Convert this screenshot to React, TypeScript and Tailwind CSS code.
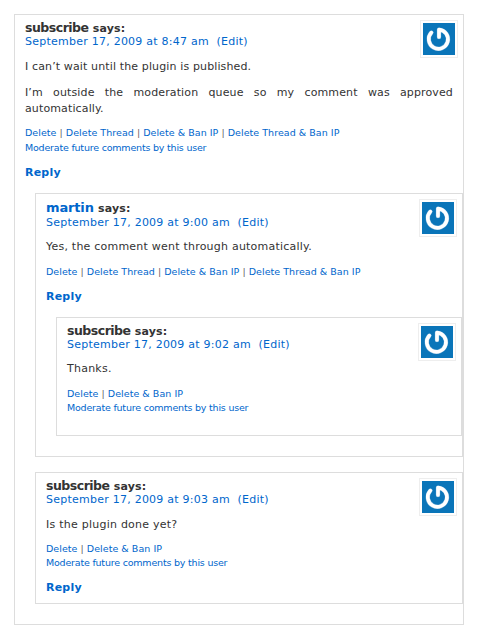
import { ReactNode } from "react";
import { clsx } from "clsx";

type CommentProps = {
  author: string;
  authorLink?: boolean;
  date: string;
  body: string[];
  actions: string[];
  moderate?: boolean;
  reply?: boolean;
  className?: string;
  bodyClass?: string;
  actionsClass?: string;
  children?: ReactNode;
};

function Avatar({ className }: { className?: string }) {
  return (
    <div className={clsx("float-right -mr-[5px] size-[38px] border border-[#eee] bg-white p-[2px]", className)}>
      <svg viewBox="0 0 32 32" className="block size-8 bg-[#0a75b9]" fill="none" strokeLinecap="round" strokeLinejoin="round">
        <path d="M8.4 9.6A9.6 9.6 0 1 0 16 6.6V14" stroke="#5fa3d0" strokeWidth="4.4" />
        <path d="M8.4 9.6A9.6 9.6 0 1 0 16 6.6V14" stroke="#fff" strokeWidth="3.7" />
      </svg>
    </div>
  );
}

function Comment({
  author,
  authorLink,
  date,
  body,
  actions,
  moderate,
  reply,
  className,
  bodyClass = "mt-2.5 tracking-[0.24px]",
  actionsClass = "mt-[9px] leading-[14px]",
  children,
}: CommentProps) {
  return (
    <li className={clsx("border border-[#ddd] px-2.5", className)}>
      <Avatar className={authorLink ? "-mt-[2px]" : "-mt-px"} />
      <div className="h-3.5 text-[12px] leading-[14px] font-bold whitespace-nowrap">
        {authorLink ? (
          <a href="#" className="text-[13px] tracking-[-0.15px] text-[#0066cc]">{author}</a>
        ) : (
          <span className="text-[12.5px] tracking-[-0.5px]">{author}</span>
        )}{" "}
        <span className="text-[11px] tracking-[0.2px]">says:</span>
      </div>
      <div
        className={clsx(
          "h-3.5 text-[11px] tracking-[0.24px] whitespace-nowrap text-[#0066cc]",
          authorLink ? "leading-4" : "leading-[14px]",
        )}
      >
        <a href="#">{date}</a>&nbsp; <a href="#">(Edit)</a>
      </div>
      <div className={clsx("space-y-2.5 text-justify text-[11px] leading-4", bodyClass)}>
        {body.map((text) => (
          <p key={text}>{text}</p>
        ))}
      </div>
      <div className={clsx("text-[9.5px] whitespace-nowrap", actionsClass)}>
        <div className="tracking-[0.04px] text-[#666]">
          {actions.map((label, i) => (
            <span key={label}>
              {i > 0 && " | "}
              <a href="#" className="text-[#0066cc]">{label}</a>
            </span>
          ))}
        </div>
        {moderate && (
          <a href="#" className="block tracking-[-0.2px] text-[#0066cc]">
            Moderate future comments by this user
          </a>
        )}
      </div>
      {reply && (
        <div className="mt-2.5 h-3.5 text-[11px] leading-4 font-bold tracking-[0.2px]">
          <a href="#" className="text-[#0066cc]">Reply</a>
        </div>
      )}
      {children && <ul className="mt-3.5 -mr-2.5 ml-2.5">{children}</ul>}
    </li>
  );
}

const threadActions = ["Delete", "Delete Thread", "Delete & Ban IP", "Delete Thread & Ban IP"];
const singleActions = ["Delete", "Delete & Ban IP"];

export default function App() {
  return (
    <div className="h-[638px] w-[479px] bg-white pt-3.5 pl-3.5 font-['DejaVu_Sans',sans-serif] text-[#333]">
      <ul className="w-[450px]">
        <Comment
          author="subscribe"
          date="September 17, 2009 at 8:47 am"
          body={[
            "I can’t wait until the plugin is published.",
            "I’m outside the moderation queue so my comment was approved automatically.",
          ]}
          actions={threadActions}
          moderate
          reply
          className="h-[611px] pt-1.5"
          bodyClass="mt-2.5 tracking-[0.13px]"
          actionsClass="mt-2 leading-[15px]"
        >
          <Comment
            author="martin"
            authorLink
            date="September 17, 2009 at 9:00 am"
            body={["Yes, the comment went through automatically."]}
            actions={threadActions}
            reply
            className="h-[264px] pt-[7px]"
            bodyClass="mt-2.5 tracking-[0.22px]"
            actionsClass="mt-[9px] leading-[15px]"
          >
            <Comment
              author="subscribe"
              date="September 17, 2009 at 9:02 am"
              body={["Thanks."]}
              actions={singleActions}
              moderate
              className="h-[119px] pt-1.5"
              bodyClass="mt-[9px] tracking-[0.24px]"
              actionsClass="mt-2.5 leading-[14px]"
            />
          </Comment>
          <Comment
            author="subscribe"
            date="September 17, 2009 at 9:03 am"
            body={["Is the plugin done yet?"]}
            actions={singleActions}
            moderate
            reply
            className="mt-[15px] h-[132px] pt-1.5"
          />
        </Comment>
      </ul>
    </div>
  );
}
